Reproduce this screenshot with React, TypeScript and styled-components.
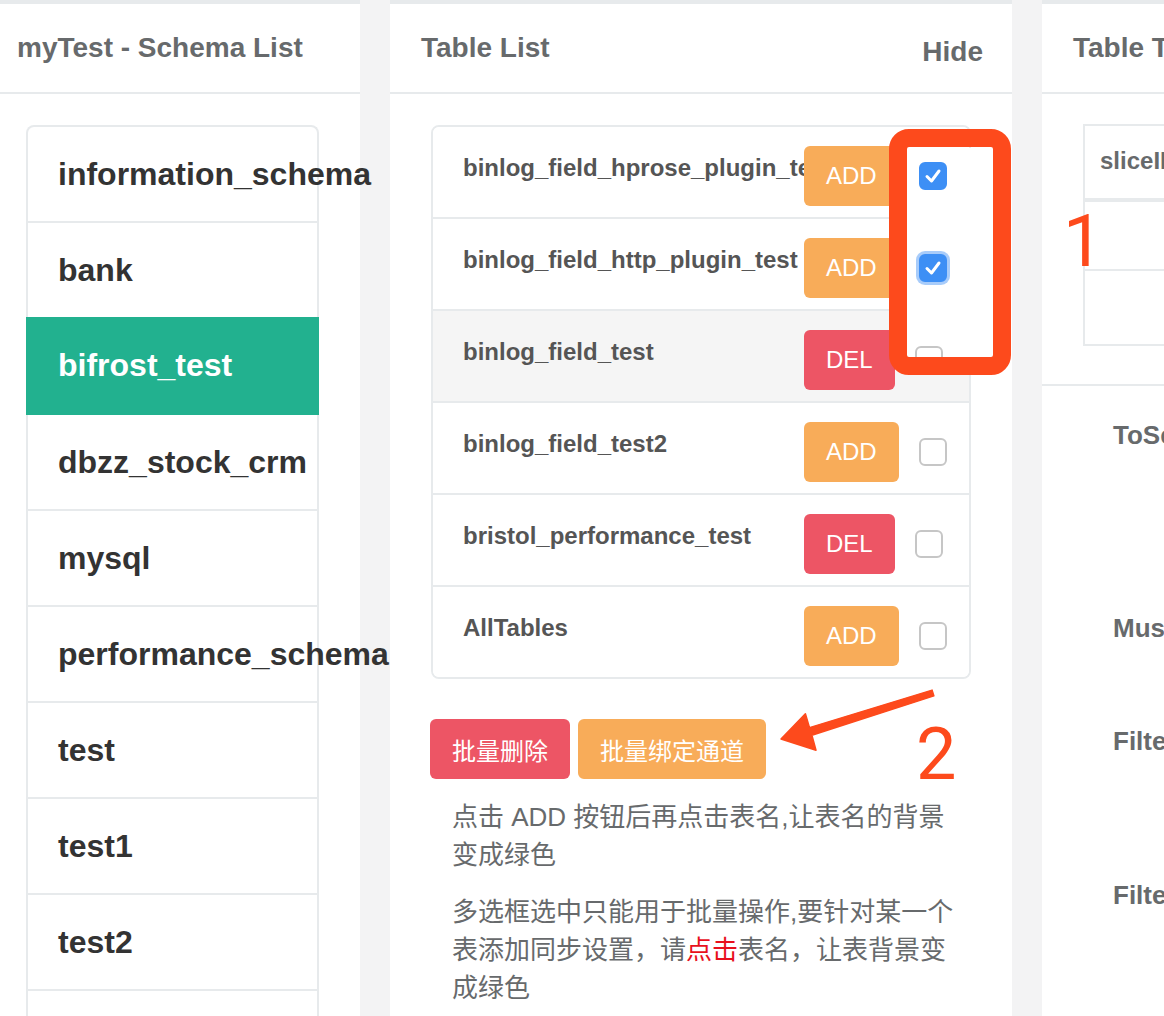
import React from 'react';
import styled, { createGlobalStyle, css } from 'styled-components';

const GlobalStyle = createGlobalStyle`
  *, *::before, *::after { box-sizing: border-box; }
  html, body {
    margin: 0;
    padding: 0;
    background: #f3f3f4;
  }
  body {
    font-family: "Liberation Sans", "Noto Sans CJK SC", Arial, sans-serif;
  }
`;

const Page = styled.div`
  position: relative;
  display: flex;
  gap: 30px;
  width: 1164px;
  height: 1016px;
  overflow: hidden;
  background: #f3f3f4;
`;

const Panel = styled.section<{ $width: number }>`
  flex: 0 0 ${p => p.$width}px;
  background: #fff;
  border-top: 4px solid #e7eaec;
`;

const PanelHeader = styled.header<{ $pad: number }>`
  display: flex;
  justify-content: space-between;
  align-items: center;
  height: 90px;
  padding: 0 29px 0 ${p => p.$pad}px;
  border-bottom: 2px solid #e7eaec;
`;

const Title = styled.h5`
  margin: 0;
  font-size: 28px;
  font-weight: 700;
  color: #676a6c;
  white-space: nowrap;
`;

const HideLink = styled.a`
  font-size: 28px;
  font-weight: 700;
  color: #676a6c;
  padding-top: 8px;
  cursor: pointer;
`;

const PanelBody = styled.div<{ $pad: number }>`
  padding: 31px 0 0 ${p => p.$pad}px;
`;

/* schema list */

const SchemaList = styled.ul`
  list-style: none;
  margin: 0;
  padding: 0;
  width: 293px;
  border: 2px solid #e7eaec;
  border-bottom: none;
  border-radius: 8px 8px 0 0;
`;

const SchemaItem = styled.li<{ $active?: boolean }>`
  display: flex;
  align-items: center;
  height: 96px;
  padding-left: 30px;
  border-bottom: 2px solid #e7eaec;
  font-size: 32px;
  font-weight: 700;
  color: #333;
  white-space: nowrap;
  cursor: pointer;

  ${p => p.$active && css`
    margin: -2px -2px 0;
    height: 98px;
    padding-left: 32px;
    background: #22b18f;
    border-bottom-color: #22b18f;
    color: #fff;
  `}
`;

/* table list */

const TableList = styled.ul`
  list-style: none;
  margin: 0;
  padding: 0;
  width: 540px;
  border: 2px solid #e7eaec;
  border-radius: 8px;
  overflow: hidden;
`;

const TableRow = styled.li<{ $hover?: boolean }>`
  display: flex;
  align-items: center;
  height: 92px;
  padding-left: 30px;
  border-bottom: 2px solid #e7eaec;
  background: ${p => (p.$hover ? '#f5f5f5' : '#fff')};

  &:last-child {
    border-bottom: none;
    height: 90px;
  }
`;

const RowName = styled.span`
  flex: 1;
  min-width: 0;
  overflow: hidden;
  white-space: nowrap;
  padding-bottom: 8px;
  font-size: 24px;
  font-weight: 700;
  color: #555;
`;

const RowActions = styled.div`
  flex: 0 0 165px;
  display: flex;
  align-items: center;
  gap: 20px;
  padding-top: 8px;
`;

const ActionButton = styled.button<{ $kind: 'add' | 'del' }>`
  height: 60px;
  padding: 0 22px;
  border: none;
  border-radius: 6px;
  font-family: inherit;
  font-size: 24px;
  color: #fff;
  white-space: nowrap;
  background: ${p => (p.$kind === 'add' ? '#f8ac59' : '#ed5565')};
  cursor: pointer;
`;

const CheckBox = styled.span<{ $checked?: boolean; $focus?: boolean }>`
  position: relative;
  z-index: 2;
  display: inline-flex;
  align-items: center;
  justify-content: center;
  width: 28px;
  height: 28px;
  border-radius: 6px;
  border: 2px solid ${p => (p.$checked ? '#3d8ff5' : '#c6c6c6')};
  background: ${p => (p.$checked ? '#3d8ff5' : '#fff')};
  box-shadow: ${p => (p.$focus ? '0 0 0 3px rgba(61, 143, 245, 0.45)' : 'none')};
`;

const BulkBar = styled.div`
  display: flex;
  gap: 8px;
  margin-top: 40px;
  margin-left: -1px;
`;

const Notes = styled.div`
  width: 510px;
  margin: 19px 0 0 21px;
  font-size: 26px;
  line-height: 38px;
  color: #676a6c;

  p { margin: 0 0 19px; }
`;

const Hot = styled.span`
  color: #e8101c;
`;

/* right panel */

const MiniTable = styled.div`
  width: 320px;
  border: 2px solid #e7eaec;
  margin-top: -1px;
`;

const MiniHead = styled.div`
  display: flex;
  align-items: center;
  height: 76px;
  padding: 0 0 2px 15px;
  border-bottom: 4px solid #e7eaec;
  font-size: 24px;
  font-weight: 700;
  color: #676a6c;
`;

const MiniRow = styled.div<{ $h: number }>`
  height: ${p => p.$h}px;
  border-bottom: 2px solid #e7eaec;

  &:last-child { border-bottom: none; }
`;

const Divider = styled.div`
  height: 40px;
  border-bottom: 2px solid #e7eaec;
`;

const FormArea = styled.div`
  padding: 30px 0 0 71px;
`;

const FormGroup = styled.div<{ $h: number }>`
  height: ${p => p.$h}px;
`;

const FormLabel = styled.label`
  display: block;
  font-size: 26px;
  line-height: 38px;
  font-weight: 700;
  color: #676a6c;
  white-space: nowrap;
`;

/* annotations drawn over the screenshot */

const NoteFill = styled.div`
  position: absolute;
  left: 907px;
  top: 148px;
  width: 86px;
  height: 209px;
  background: #fff;
  z-index: 1;
`;

const NoteFrame = styled.div`
  position: absolute;
  left: 889px;
  top: 129px;
  width: 122px;
  height: 246px;
  border: 18px solid #fd4a1c;
  border-radius: 20px;
  z-index: 3;
`;

const NoteDigit = styled.span<{ $left: number; $top: number }>`
  position: absolute;
  left: ${p => p.$left}px;
  top: ${p => p.$top}px;
  z-index: 3;
  font-family: Roboto, "Liberation Sans", sans-serif;
  font-weight: 400;
  font-size: 72px;
  line-height: 1;
  color: #fd4a1c;
`;

const NoteArrow = styled.svg`
  position: absolute;
  left: 770px;
  top: 680px;
  z-index: 3;
`;

const schemas = [
  'information_schema',
  'bank',
  'bifrost_test',
  'dbzz_stock_crm',
  'mysql',
  'performance_schema',
  'test',
  'test1',
  'test2',
  '',
];

const tables: {
  name: string;
  kind: 'add' | 'del';
  checked?: boolean;
  focus?: boolean;
  hover?: boolean;
}[] = [
  { name: 'binlog_field_hprose_plugin_test', kind: 'add', checked: true },
  { name: 'binlog_field_http_plugin_test', kind: 'add', checked: true, focus: true },
  { name: 'binlog_field_test', kind: 'del', hover: true },
  { name: 'binlog_field_test2', kind: 'add' },
  { name: 'bristol_performance_test', kind: 'del' },
  { name: 'AllTables', kind: 'add' },
];

const formFields = [
  { label: 'ToServer', h: 193 },
  { label: 'MustBeSuccess', h: 113 },
  { label: 'FilterQuery', h: 154 },
  { label: 'FilterUpdate', h: 120 },
];

function Check() {
  return (
    <svg width="22" height="22" viewBox="0 0 22 22">
      <polyline
        points="5,11.5 9.5,16 17,6"
        fill="none"
        stroke="#fff"
        strokeWidth="3"
        strokeLinecap="round"
        strokeLinejoin="round"
      />
    </svg>
  );
}

export default function App() {
  return (
    <>
      <GlobalStyle />
      <Page>
        <Panel $width={360}>
          <PanelHeader $pad={17}>
            <Title>myTest - Schema List</Title>
          </PanelHeader>
          <PanelBody $pad={26}>
            <SchemaList>
              {schemas.map((s, i) => (
                <SchemaItem key={i} $active={s === 'bifrost_test'}>
                  {s}
                </SchemaItem>
              ))}
            </SchemaList>
          </PanelBody>
        </Panel>

        <Panel $width={622}>
          <PanelHeader $pad={31}>
            <Title>Table List</Title>
            <HideLink>Hide</HideLink>
          </PanelHeader>
          <PanelBody $pad={41}>
            <TableList>
              {tables.map(t => (
                <TableRow key={t.name} $hover={t.hover}>
                  <RowName>{t.name}</RowName>
                  <RowActions>
                    <ActionButton $kind={t.kind}>{t.kind === 'add' ? 'ADD' : 'DEL'}</ActionButton>
                    <CheckBox $checked={t.checked} $focus={t.focus}>
                      {t.checked && <Check />}
                    </CheckBox>
                  </RowActions>
                </TableRow>
              ))}
            </TableList>
            <BulkBar>
              <ActionButton $kind="del">批量删除</ActionButton>
              <ActionButton $kind="add">批量绑定通道</ActionButton>
            </BulkBar>
            <Notes>
              <p>点击 ADD 按钮后再点击表名,让表名的背景变成绿色</p>
              <p>
                多选框选中只能用于批量操作,要针对某一个表添加同步设置，请<Hot>点击</Hot>表名，让表背景变成绿色
              </p>
            </Notes>
          </PanelBody>
        </Panel>

        <Panel $width={400}>
          <PanelHeader $pad={31}>
            <Title>Table ToServer</Title>
          </PanelHeader>
          <PanelBody $pad={41}>
            <MiniTable>
              <MiniHead>sliceID</MiniHead>
              <MiniRow $h={69} />
              <MiniRow $h={73} />
            </MiniTable>
          </PanelBody>
          <Divider />
          <FormArea>
            {formFields.map(f => (
              <FormGroup key={f.label} $h={f.h}>
                <FormLabel>{f.label}</FormLabel>
              </FormGroup>
            ))}
          </FormArea>
        </Panel>

        <NoteFill />
        <NoteFrame />
        <NoteDigit $left={1063} $top={206}>1</NoteDigit>
        <NoteDigit $left={916} $top={719}>2</NoteDigit>
        <NoteArrow width="180" height="90" viewBox="770 680 180 90">
          <polygon
            points="781,739 805.4,713.8 809.5,727.6 932.1,690.1 933.9,695.9 811.9,735.3 816,750.2"
            fill="#fd4a1c"
            stroke="#fd4a1c"
            strokeWidth="1.5"
            strokeLinejoin="round"
          />
        </NoteArrow>
      </Page>
    </>
  );
}
